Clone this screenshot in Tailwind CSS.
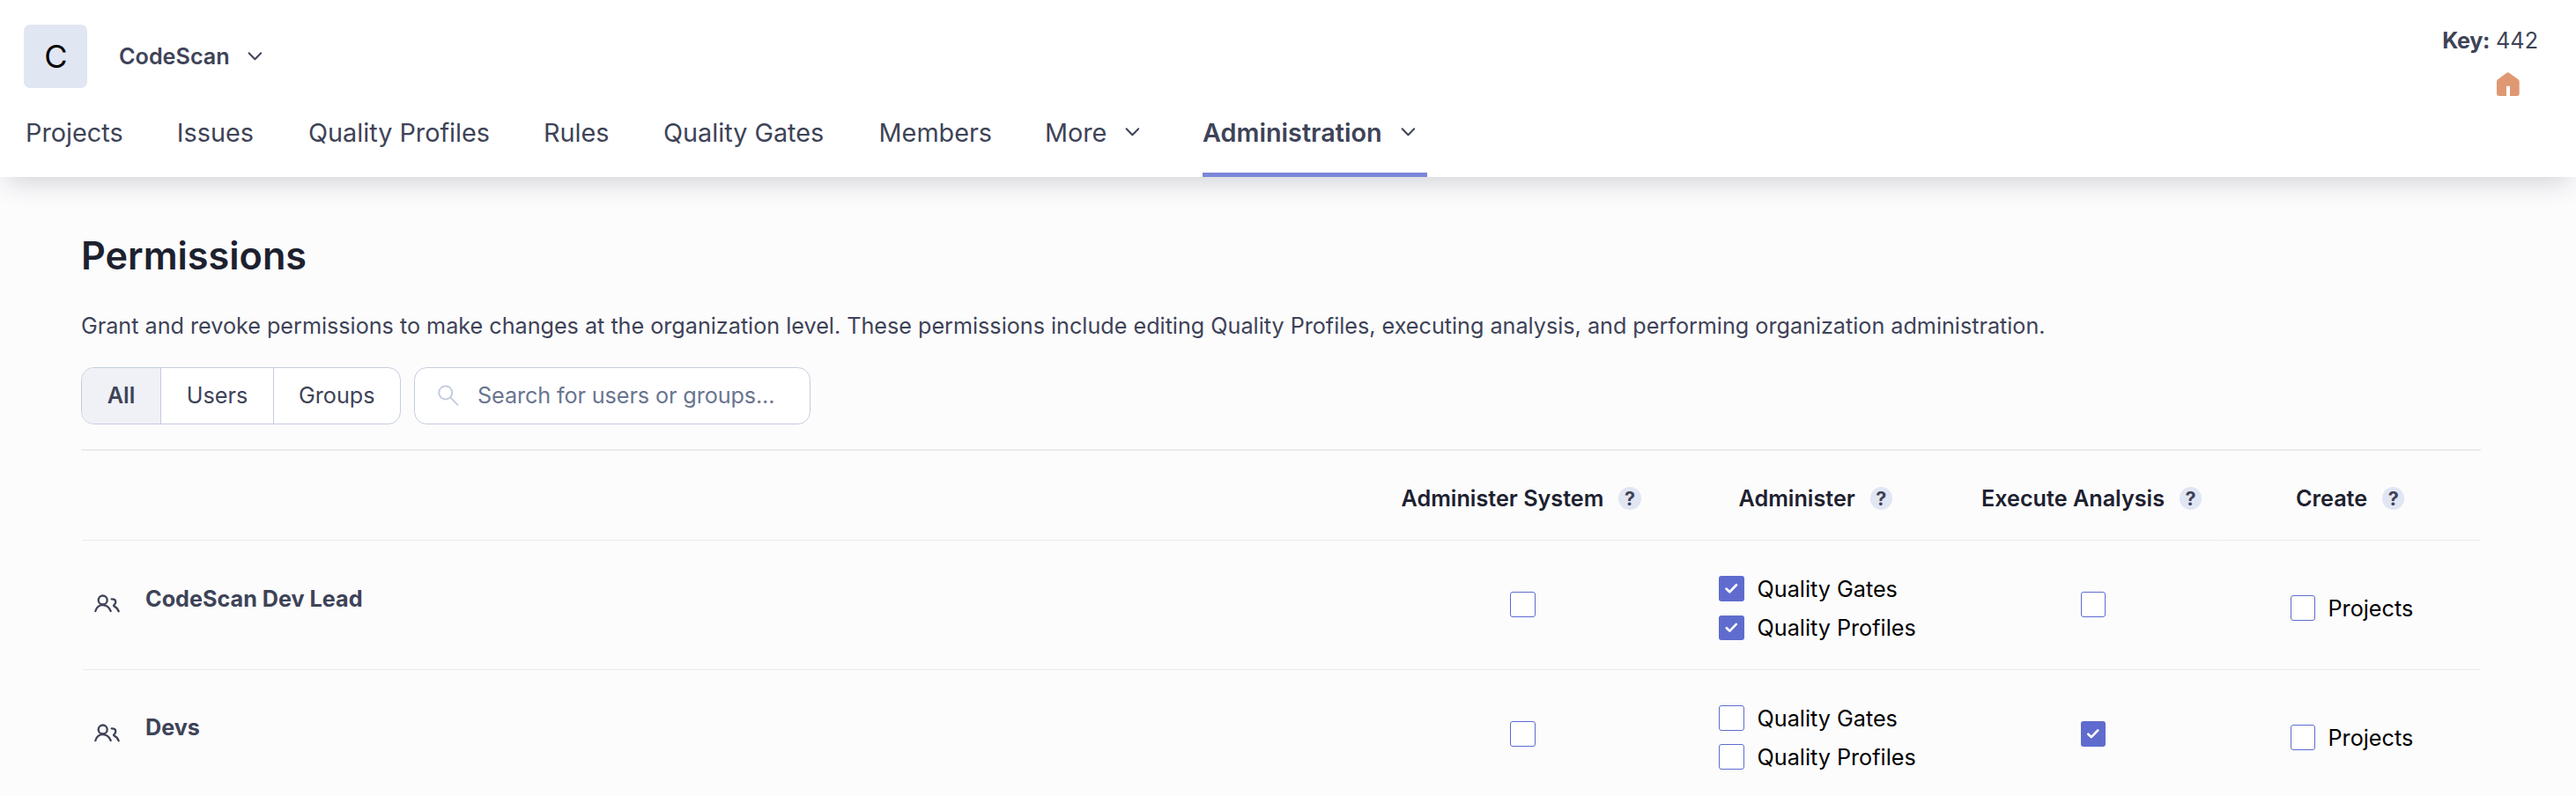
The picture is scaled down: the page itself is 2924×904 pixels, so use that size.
<!DOCTYPE html>
<html lang="en">
<head>
<meta charset="utf-8">
<title>Permissions - CodeScan</title>
<script src="https://cdn.jsdelivr.net/npm/@tailwindcss/browser@4"></script>
</head>
<body class="h-[904px] overflow-hidden bg-[#fcfcfd] font-['Inter',sans-serif] text-[25.2px] leading-9 text-[#3e4357]">
<svg class="hidden">
  <symbol id="chevron" viewBox="0 0 16 16"><path d="M4.200 5.700l3.800 3.900L11.800 5.700" fill="none" stroke="currentColor" stroke-width="1.1" stroke-linecap="round" stroke-linejoin="round"/></symbol>
  <symbol id="check" viewBox="0 0 29 29"><path d="M8.600 14.700l3.700 3.500 7.700-7.900" fill="none" stroke="#fff" stroke-width="2.7" stroke-linecap="round" stroke-linejoin="round"/></symbol>
  <symbol id="users" viewBox="0 0 31 21"><g fill="none" stroke="currentColor" stroke-width="2.300" stroke-linecap="round" stroke-linejoin="round"><circle cx="10.700" cy="6.500" r="5"/><path d="M2.300 19C3.600 14.900 6.600 12.200 10.700 12.200S18 14.900 19.700 19"/><path d="M20.700 5.300C23.500 5.100 25.300 6.400 25.300 8.500C25.300 10.200 24.600 11.300 23.400 12.200C22.800 12.700 23 13.300 23.700 13.600C26 14.600 27.600 16.600 28.700 19.200"/></g></symbol>
</svg>

<header class="relative flex h-[201px] flex-col bg-white shadow-[0_14px_28px_-8px_rgba(29,33,47,0.19)]">
  <div class="flex h-[100px] justify-between pl-[27px] pr-[43px]">
    <div class="flex items-center pt-7">
      <div class="flex size-[72px] items-center justify-center rounded-[7px] bg-[#e1e6f3] pl-px text-[36px] text-black">C</div>
      <span class="ml-9 font-semibold">CodeScan</span>
      <svg class="ml-[14.4px] size-[28.8px]"><use href="#chevron"/></svg>
    </div>
    <div class="flex flex-col items-end pt-7">
      <div><b class="font-bold tracking-[-0.4px]">Key:</b> 442</div>
      <svg class="mr-[21px] mt-[18px] h-[27px] w-[26px] shrink-0" viewBox="0 0 26 27"><path d="M11.300.7Q12.700-.2 14.100.7L24.500 8.300Q25.700 9.200 25.700 10.700V24Q25.700 27 22.700 27H15V15.800H11V27H3Q0 27 0 24V10.700Q0 9.200 1.200 8.300Z" fill="#e09872"/></svg>
    </div>
  </div>
  <nav class="flex h-[101px] items-center pl-[29px] text-[28.8px] whitespace-nowrap">
    <a class="w-[171.8px]">Projects</a>
    <a class="w-[149.2px]">Issues</a>
    <a class="w-[267px]">Quality Profiles</a>
    <a class="w-[136px]">Rules</a>
    <a class="w-[244.6px]">Quality Gates</a>
    <a class="w-[188.4px]">Members</a>
    <a class="flex w-[179px] items-center justify-between pr-[65px]">More<svg class="size-[28.8px]"><use href="#chevron"/></svg></a>
    <a class="flex h-full w-[255px] items-center justify-between border-b-5 border-[#7b87d9] pt-[5px] pr-[7.2px] font-semibold">Administration<svg class="size-[28.8px]"><use href="#chevron"/></svg></a>
  </nav>
</header>

<main class="pl-[92px] pr-[108px] pt-[62px]">
  <h1 class="text-[43.2px] leading-[54px] font-semibold text-[#1d212f]">Permissions</h1>
  <p class="mt-[35px] whitespace-nowrap tracking-[-0.015px]">Grant and revoke permissions to make changes at the organization level. These permissions include editing Quality Profiles, executing analysis, and performing organization administration.</p>
  <div class="mt-[29px] flex h-[65px] gap-[15.5px]">
    <div class="flex w-[362.5px] overflow-hidden rounded-[14.4px] border border-[#c5cddf] bg-white">
      <button class="w-[90px] border-r border-[#c5cddf] bg-[#eff1f7] pb-px font-semibold">All</button>
      <button class="w-[128px] border-r border-[#c5cddf] pb-px">Users</button>
      <button class="flex-1 pb-px">Groups</button>
    </div>
    <div class="flex w-[450px] items-center rounded-[14.4px] border border-[#c5cddf] bg-white pl-[25px] text-[#6a7590]">
      <svg class="mr-[20px] size-[26px]" viewBox="0 0 26 26" fill="none" stroke="#c5cddf" stroke-width="2" stroke-linecap="round"><circle cx="9.700" cy="8.900" r="7.500"/><path d="M15.200 14.400l8.400 8.500"/></svg>
      <span class="pb-px tracking-[-0.1px]">Search for users or groups...</span>
    </div>
  </div>

  <section class="mt-[28px] border-t-2 border-[#ebebeb] px-px">
    <div class="grid h-[102px] grid-cols-[1461px_349px_309px_310px_293px] font-semibold text-[#1d212f] *:flex *:items-center *:border-b *:border-[#ebebeb] *:pt-[7px]">
      <div></div>
      <div class="pl-[36.5px]">Administer System<span class="ml-[17px] flex size-[25.2px] items-center justify-center rounded-full bg-[#e1e6f3] text-[21.6px] font-bold text-[#3e4357]">?</span></div>
      <div class="pl-[70.5px]">Administer<span class="ml-[17px] flex size-[25.2px] items-center justify-center rounded-full bg-[#e1e6f3] text-[21.6px] font-bold text-[#3e4357]">?</span></div>
      <div class="pl-[37px]">Execute Analysis<span class="ml-[17px] flex size-[25.2px] items-center justify-center rounded-full bg-[#e1e6f3] text-[21.6px] font-bold text-[#3e4357]">?</span></div>
      <div class="ml-px pl-[83px]">Create<span class="ml-[17px] flex size-[25.2px] items-center justify-center rounded-full bg-[#e1e6f3] text-[21.6px] font-bold text-[#3e4357]">?</span></div>
    </div>

    <div class="grid h-[147px] grid-cols-[1461px_349px_309px_310px_293px] text-black *:border-b *:border-[#ebebeb]">
      <div class="flex pl-[13px] text-[#3e4357]"><svg class="mt-[61px] h-[21px] w-[31px]"><use href="#users"/></svg><strong class="mt-12 ml-[28px] font-bold">CodeScan Dev Lead</strong></div>
      <div class="flex justify-center pt-[58px]"><i class="size-[29px] rounded-[3px] border border-[#5d6cd0] bg-white"></i></div>
      <div class="flex flex-col gap-4 pt-10 pl-12">
        <label class="flex h-[29px] items-center gap-[14.5px]"><i class="size-[29px] rounded-[3px] bg-[#5f6cce]"><svg class="size-full"><use href="#check"/></svg></i>Quality Gates</label>
        <label class="flex h-[28px] items-center gap-[14.5px]"><i class="h-[28px] w-[29px] rounded-[3px] bg-[#5f6cce]"><svg class="size-full"><use href="#check"/></svg></i>Quality Profiles</label>
      </div>
      <div class="pt-[58px] pl-[150px]"><i class="block h-[29px] w-[28px] rounded-[3px] border border-[#5d6cd0] bg-white"></i></div>
      <div class="ml-px pt-[62px] pl-[77px]"><label class="flex h-[29px] items-center gap-[14.5px]"><i class="h-[29px] w-[28px] rounded-[3px] border border-[#5d6cd0] bg-white"></i>Projects</label></div>
    </div>

    <div class="grid h-[147px] grid-cols-[1461px_349px_309px_310px_293px] text-black *:border-b *:border-[#ebebeb]">
      <div class="flex pl-[13px] text-[#3e4357]"><svg class="mt-[61px] h-[21px] w-[31px]"><use href="#users"/></svg><strong class="mt-[47px] ml-[28px] font-bold">Devs</strong></div>
      <div class="flex justify-center pt-[58px]"><i class="size-[29px] rounded-[3px] border border-[#5d6cd0] bg-white"></i></div>
      <div class="flex flex-col gap-[15px] pt-10 pl-12">
        <label class="flex h-[29px] items-center gap-[14.5px]"><i class="size-[29px] rounded-[3px] border border-[#5d6cd0] bg-white"></i>Quality Gates</label>
        <label class="flex h-[29px] items-center gap-[14.5px]"><i class="size-[29px] rounded-[3px] border border-[#5d6cd0] bg-white"></i>Quality Profiles</label>
      </div>
      <div class="pt-[58px] pl-[150px]"><i class="block h-[29px] w-[28px] rounded-[3px] bg-[#5f6cce]"><svg class="size-full"><use href="#check"/></svg></i></div>
      <div class="ml-px pt-[62px] pl-[77px]"><label class="flex h-[29px] items-center gap-[14.5px]"><i class="h-[29px] w-[28px] rounded-[3px] border border-[#5d6cd0] bg-white"></i>Projects</label></div>
    </div>
  </section>
</main>
</body></html>
